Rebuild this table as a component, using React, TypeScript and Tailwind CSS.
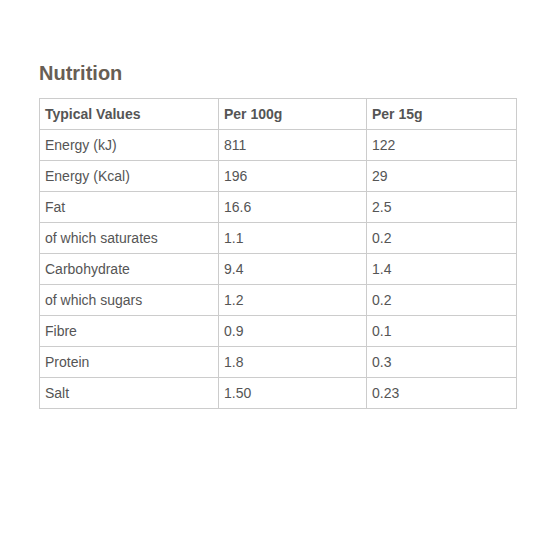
import React from "react";

const rows: [string, string, string][] = [
  ["Energy (kJ)", "811", "122"],
  ["Energy (Kcal)", "196", "29"],
  ["Fat", "16.6", "2.5"],
  ["of which saturates", "1.1", "0.2"],
  ["Carbohydrate", "9.4", "1.4"],
  ["of which sugars", "1.2", "0.2"],
  ["Fibre", "0.9", "0.1"],
  ["Protein", "1.8", "0.3"],
  ["Salt", "1.50", "0.23"],
];

export default function App() {
  return (
    <div
      className="w-[560px] h-[560px] bg-white pl-[39px] pt-[61px]"
      style={{ fontFamily: '"Liberation Sans", Arial, sans-serif' }}
    >
      <h2 className="text-[20px] leading-[24px] font-bold text-[#685e54] mb-[13px]">Nutrition</h2>
      <table className="border-collapse w-[478px] text-[14px] text-[#555555] table-fixed">
        <colgroup>
          <col className="w-[179px]" />
          <col className="w-[148px]" />
          <col className="w-[150px]" />
        </colgroup>
        <thead>
          <tr className="h-[31px]">
            <th className="border border-[#cccccc] text-left font-bold pl-[5px] pr-[6px] py-0">Typical Values</th>
            <th className="border border-[#cccccc] text-left font-bold pl-[5px] pr-[6px] py-0">Per 100g</th>
            <th className="border border-[#cccccc] text-left font-bold pl-[5px] pr-[6px] py-0">Per 15g</th>
          </tr>
        </thead>
        <tbody>
          {rows.map((r) => (
            <tr key={r[0]} className="h-[31px]">
              {r.map((c, i) => (
                <td key={i} className="border border-[#cccccc] pl-[5px] pr-[6px] py-0 font-normal">
                  {c}
                </td>
              ))}
            </tr>
          ))}
        </tbody>
      </table>
    </div>
  );
}
